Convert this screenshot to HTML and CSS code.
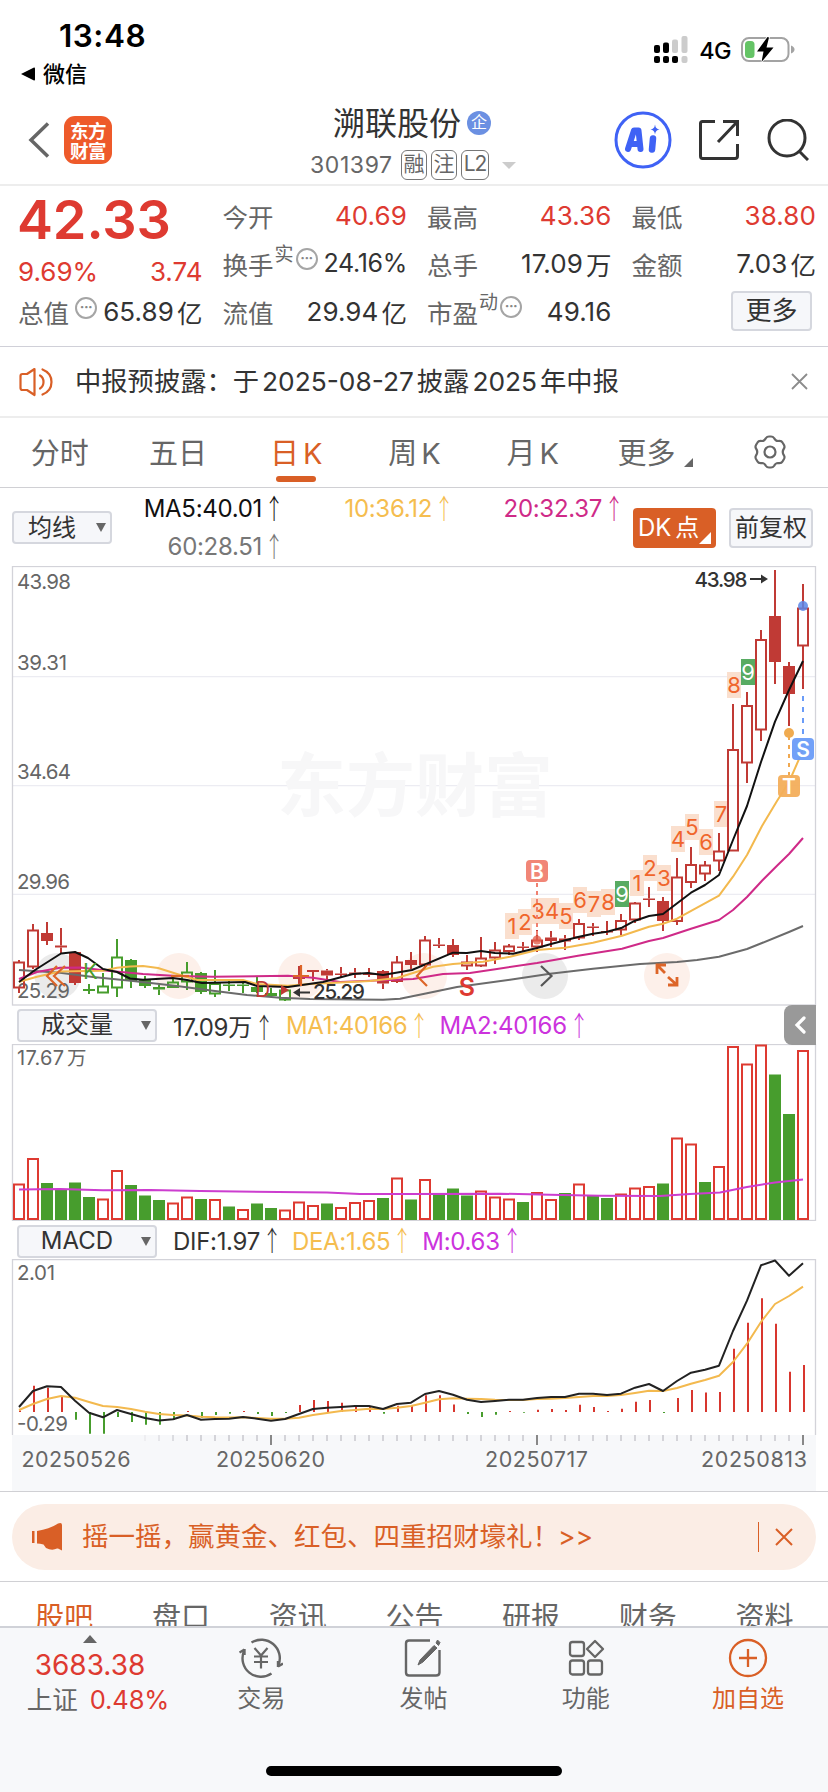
FILE: index.html
```html
<!DOCTYPE html>
<html lang="zh-CN">
<head>
<meta charset="utf-8">
<title>溯联股份 301397</title>
<link rel="stylesheet" href="styles.css">
</head>
<body>
<div class="app">
  <header class="status">
    <div class="status-left">
      <div class="clock">13:48</div>
      <div class="return"><svg width="14" height="14" viewBox="0 0 14 14"><path d="M0 7 L13 .5 Q14 .3 14 1.500 V12.500 Q14 13.700 13 13.500Z"/></svg><span>微信</span></div>
    </div>
    <div class="status-right">
      <svg width="34" height="28" viewBox="0 0 34 28">
        <g fill="#000"><rect x="0" y="9" width="6" height="8" rx="2"/><rect x="9" y="6.500" width="6" height="10.500" rx="2"/><rect x="0" y="20" width="6" height="7" rx="2"/><rect x="9" y="20" width="6" height="7" rx="2"/><rect x="18" y="20" width="6" height="7" rx="2"/></g>
        <g fill="#ccc"><rect x="18" y="3.500" width="6" height="13.500" rx="2"/><rect x="27.500" y="0" width="6" height="17" rx="2"/><rect x="27.500" y="20" width="6" height="7" rx="2"/></g>
      </svg>
      <span class="net">4G</span>
      <svg width="54" height="28" viewBox="0 0 54 28">
        <rect x="1" y="2" width="46.500" height="23" rx="7" fill="none" stroke="#a3a3a3" stroke-width="2"/>
        <path d="M50 9.500 Q53.500 11 53.500 13.500 Q53.500 16 50 17.500Z" fill="#a3a3a3"/>
        <rect x="4" y="5" width="9.500" height="17" rx="3.500" fill="#65c466"/>
        <path d="M26.500 1 L16 15.500 H22.500 L20.500 26 L32.500 11.500 H25.500 L28 1.500Z" fill="#000" stroke="#fff" stroke-width="1.500" paint-order="stroke"/>
      </svg>
    </div>
  </header>

  <nav class="titlebar">
    <div class="title-left">
      <svg width="22" height="36" viewBox="0 0 22 36"><path d="M20 1.500 L3 18 L20 34.500" fill="none" stroke="#666" stroke-width="3.500"/></svg>
      <div class="logo">东方<br>财富</div>
    </div>
    <div class="title-mid">
      <div class="name">溯联股份<span class="ent">企</span></div>
      <div class="code"><span class="digits">301397</span><span class="chip">融</span><span class="chip">注</span><span class="chip l2">L2</span><i class="caret"></i></div>
    </div>
    <div class="title-right">
      <svg width="58" height="58" viewBox="0 0 58 58">
        <circle cx="29" cy="29" r="27" fill="none" stroke="#3f62f5" stroke-width="3"/>
        <g fill="none" stroke="#3f62f5" stroke-linecap="round" stroke-linejoin="round"><path d="M14 38 L20 19.500 H24.500 L26.500 38 M17 33 H26" stroke-width="6"/><path d="M39 27.500 L38 38.500" stroke-width="6.500"/></g>
        <path d="M41 13.500 Q41.500 18 45.500 18.500 Q41.500 19 41 23.500 Q40.500 19 36.500 18.500 Q40.500 18 41 13.500Z" fill="#3f62f5"/>
      </svg>
      <svg width="42" height="42" viewBox="0 0 42 42"><path d="M17 2.500 H4.500 Q2.500 2.500 2.500 4.500 V37 Q2.500 39.500 4.500 39.500 H37 Q39.500 39.500 39.500 37 V25 M25 2.500 H39.500 V17 M39 3 L20 23" fill="none" stroke="#333" stroke-width="3"/></svg>
      <svg width="42" height="42" viewBox="0 0 42 42"><circle cx="20" cy="19" r="18" fill="none" stroke="#333" stroke-width="3"/><path d="M32 32 L41 41" stroke="#333" stroke-width="3"/></svg>
    </div>
  </nav>

  <section class="stats">
    <div class="col main">
      <div class="price">42.33</div>
      <div class="cell change red"><span>9.69%</span><span>3.74</span></div>
      <div class="cell total"><label>总值</label><i class="more-dot">···</i><b>65.89<em>亿</em></b></div>
    </div>
    <div class="col">
      <div class="cell"><label>今开</label><b class="red">40.69</b></div>
      <div class="cell"><label>换手</label><sup>实</sup><i class="more-dot">···</i><b class="tight">24.16%</b></div>
      <div class="cell"><label>流值</label><b>29.94<em>亿</em></b></div>
    </div>
    <div class="col">
      <div class="cell"><label>最高</label><b class="red">43.36</b></div>
      <div class="cell"><label>总手</label><b>17.09<em>万</em></b></div>
      <div class="cell"><label>市盈</label><sup>动</sup><i class="more-dot">···</i><b>49.16</b></div>
    </div>
    <div class="col">
      <div class="cell"><label>最低</label><b class="red">38.80</b></div>
      <div class="cell"><label>金额</label><b>7.03<em>亿</em></b></div>
      <div class="cell"><button class="btn more">更多</button></div>
    </div>
  </section>

  <section class="notice">
    <svg width="36" height="30" viewBox="0 0 36 30" fill="none" stroke="#d95f26" stroke-width="2.200" stroke-linejoin="round"><path d="M15.500 2 L8 7 H3.500 Q1.500 7 1.500 9 V21 Q1.500 23 3.500 23 H8 L15.500 28Z"/><path d="M21 8.500 Q24.500 10.500 24.500 15 Q24.500 19.500 21 21.500 M23.500 2.500 Q32.500 6 32.500 15 Q32.500 24 23.500 27.500" stroke-linecap="round"/></svg>
    <p>中报预披露：于<span>2025-08-27</span>披露<span>2025</span>年中报</p>
    <svg width="17" height="17" viewBox="0 0 17 17"><path d="M1 1 L16 16 M16 1 L1 16" stroke="#8c8c8c" stroke-width="1.800"/></svg>
  </section>

  <nav class="periods">
    <div>分时</div><div>五日</div><div class="on">日 K</div><div>周 K</div><div>月 K</div><div>更多<i class="corner"></i></div>
    <div class="gear"><svg width="34" height="34" viewBox="0 0 34 34" fill="none" stroke="#666" stroke-width="2.200" stroke-linejoin="round"><path d="M13 3 Q14 1.500 16 1.500 H18 Q20 1.500 21 3 Q22.500 6 25 6 Q28.500 5.500 29.500 7.500 L31 10 Q32 12 31 13.500 Q28.500 17 31 20.500 Q32 22 31 24 L29.500 26.500 Q28.500 28.500 25 28 Q22.500 28 21 31 Q20 32.500 18 32.500 H16 Q14 32.500 13 31 Q11.500 28 9 28 Q5.500 28.500 4.500 26.500 L3 24 Q2 22 3 20.500 Q5.500 17 3 13.500 Q2 12 3 10 L4.500 7.500 Q5.500 5.500 9 6 Q11.500 6 13 3Z"/><circle cx="17" cy="17" r="5.500"/></svg></div>
  </nav>

  <section class="averages">
    <button class="btn drop short"><span>均线</span><i></i></button>
    <div class="ma-list"><span>MA5:40.01<u>↑</u></span><span class="yellow">10:36.12<u>↑</u></span><span class="magenta">20:32.37<u>↑</u></span><span class="grey">60:28.51<u>↑</u></span></div>
    <button class="btn dk">DK 点<i></i></button>
    <button class="btn adj">前复权</button>
  </section>

  <svg class="chart" id="price" viewBox="0 566 828 440" width="828" height="440"></svg>

  <section class="legend vol">
    <button class="btn drop"><span>成交量</span><i></i></button>
    <span class="v1">17.09万<u>↑</u></span><span class="yellow v2">MA1:40166<u>↑</u></span><span class="purple">MA2:40166<u>↑</u></span>
    <div class="collapse"><svg width="12" height="18" viewBox="0 0 12 18"><path d="M10 2 L3 9 L10 16" fill="none" stroke="#fff" stroke-width="3.200" stroke-linecap="round"/></svg></div>
  </section>
  <svg class="chart" id="volume" viewBox="0 1044 828 177" width="828" height="177"></svg>

  <section class="legend macd">
    <button class="btn drop"><span>MACD</span><i></i></button>
    <span class="m1">DIF:1.97<u>↑</u></span><span class="yellow m2">DEA:1.65<u>↑</u></span><span class="purple">M:0.63<u>↑</u></span>
  </section>
  <svg class="chart" id="macd" viewBox="0 1259 828 232" width="828" height="232"></svg>

  <section class="promo">
    <div class="pill">
      <svg width="31" height="28" viewBox="0 0 31 28"><path d="M0 8 H2.500 V20 H0Z M5 8 Q18 6 26 .5 Q30 -1 30 2 V27.500 L26 25.500 L25 25.500 Q20 28 14 25 L11.500 21.500 Q8 20.500 5 20.500Z" fill="#d95f26"/></svg>
      <p>摇一摇，赢黄金、红包、四重招财壕礼！<span>&gt;&gt;</span></p>
      <i></i>
      <svg width="18" height="18" viewBox="0 0 18 18"><path d="M1 1 L17 17 M17 1 L1 17" stroke="#d95f26" stroke-width="2"/></svg>
    </div>
  </section>

  <nav class="sections"><div class="on">股吧</div><div>盘口</div><div>资讯</div><div>公告</div><div>研报</div><div>财务</div><div>资料</div></nav>

  <footer class="bottom">
    <div class="dock">
      <div class="index"><i class="up"></i><div class="pts">3683.38</div><div class="row"><span>上证</span><em>0.48%</em></div></div>
      <div class="item"><svg width="44" height="42" viewBox="0 0 44 42" fill="none" stroke="#666" stroke-width="2.400"><path d="M12.500 5.500 A18.500 18.500 0 0 1 39.500 28 M39 30 V24 M39 29.500 L44 26.500 M32.500 36.500 A18.500 18.500 0 0 1 5 14 M5.500 12 V18 M5.500 12.500 L.5 15.500"/><path d="M15.500 11 L22 18.500 L28.500 11 M22 18.500 V31.500 M15 19.500 H29 M15 25 H29" stroke-width="2.200"/></svg><span>交易</span></div>
      <div class="item"><svg width="42" height="42" viewBox="0 0 42 42" fill="none" stroke="#666" stroke-width="2.400"><path d="M28 3.500 H7 Q4 3.500 4 6.500 V35.500 Q4 38.500 7 38.500 H34 Q37.500 38.500 37.500 35.500 V13"/><path d="M35.500 3 L38 5.500 L36.500 8.500 L34 6Z M32 8.500 L35 11 L21 25 L16 28 L18 23Z" fill="#666" stroke-width="1"/></svg><span>发帖</span></div>
      <div class="item"><svg width="38" height="42" viewBox="0 0 38 42" fill="none" stroke="#666" stroke-width="2.300" stroke-linejoin="round"><rect x="3" y="5" width="14" height="14" rx="2.500"/><rect x="3" y="23.500" width="14" height="14" rx="2.500"/><rect x="21" y="23.500" width="14" height="14" rx="2.500"/><path d="M28 4 L36 12 L28 20 L20 12Z"/></svg><span>功能</span></div>
      <div class="item add"><svg width="42" height="42" viewBox="0 0 42 42" fill="none" stroke="#d95f26" stroke-width="2.300"><circle cx="21" cy="21" r="18"/><path d="M21 12 V30 M12 21 H30"/></svg><span>加自选</span></div>
    </div>
    <div class="home"></div>
  </footer>
</div>
<script src="charts.js"></script>
</body>
</html>
```

FILE: styles.css
```css
* { box-sizing: border-box; }
body { margin: 0; background: #fff; color: #333; font-family: Inter, "Noto Sans CJK SC", sans-serif; }
.app { width: 828px; height: 1792px; overflow: hidden; display: flex; flex-direction: column; }
.app > * { flex: none; }
i, em { font-style: normal; }
u { text-decoration: none; font: 300 24px/24px "Noto Sans CJK SC", sans-serif; display: inline-flex; justify-content: center; width: 12px; margin-left: 6px; letter-spacing: 0; transform: scale(.8, 1.15); }
svg { display: block; flex: none; }
.red { color: #de3a31; }
.yellow { color: #f5bd4f; }
.magenta { color: #cf2a88; }
.purple { color: #cc33dd; }
.grey { color: #777; }

.status { height: 104px; display: flex; justify-content: space-between; color: #000; padding: 0 33px 0 21px; }
.clock { margin: 17px 0 0 38px; font-size: 31.500px; line-height: 38px; font-weight: 600; letter-spacing: .5px; }
.return { display: flex; align-items: center; gap: 8px; margin-top: 4px; font-size: 22px; line-height: 30px; font-weight: 500; }
.status-right { display: flex; align-items: center; height: 28px; margin-top: 36px; }
.net { font-size: 23.500px; font-weight: 500; margin: 0 10px 0 11px; letter-spacing: -.6px; }

.titlebar { height: 82px; border-bottom: 2px solid #ededed; display: flex; padding: 0 19px 0 28px; }
.title-left { display: flex; align-items: center; gap: 14px; width: 236px; height: 71px; }
.logo { width: 48px; height: 48px; border-radius: 11px; background: #ee5a2a; color: #fff; font: 700 18.500px/20px "Noto Sans CJK SC", sans-serif; text-align: center; padding-top: 4px; letter-spacing: -.5px; }
.title-mid { width: 316px; }
.name { display: flex; align-items: center; height: 34px; font-size: 32px; padding-left: 69px; white-space: nowrap; }
.ent { width: 24px; height: 24px; border-radius: 50%; background: #6b90e2; color: #fff; font-size: 16px; line-height: 23px; text-align: center; margin: 3px 0 0 6px; }
.code { display: flex; align-items: center; height: 30px; margin-top: 12px; padding-left: 46px; color: #666; font-size: 23px; }
.digits { letter-spacing: .6px; width: 91px; }
.chip { width: 26px; height: 30px; border: 1.500px solid #777; border-radius: 6px; font-size: 21px; line-height: 26px; text-align: center; margin-right: 4px; display: flex; justify-content: center; }
.chip.l2 { width: 28px; letter-spacing: -1px; }
.caret { border: 7px solid transparent; border-top: 7px solid #ccc; border-bottom: 0; margin-left: 9px; }
.title-right { display: flex; align-items: center; justify-content: flex-end; flex: 1; gap: 27px; height: 72px; }
.title-right svg:first-child { margin-right: -1px; }

.stats { height: 161px; border-bottom: 1px solid #d0d0d8; display: grid; grid-template-columns: repeat(4, 184.500px); gap: 20px; padding: 5px 12px 0 18px; }
.cell { height: 48px; display: flex; align-items: center; font-size: 26px; white-space: nowrap; }
.cell label { color: #666; font-size: 25.500px; }
.cell b { font-weight: 400; margin-left: auto; letter-spacing: .1px; display: flex; align-items: center; }
.cell b.tight { font-size: 25px; letter-spacing: -.3px; }
.cell em { font-size: 25.500px; letter-spacing: 0; margin-left: 3px; }
.cell sup { color: #666; font-size: 19px; line-height: 20px; margin: -16px 0 0 1px; }
.more-dot { width: 22px; height: 22px; border: 2px solid #a5a5a5; border-radius: 50%; color: #888; font-size: 14px; line-height: 16px; text-align: center; margin: -8px 0 0 2px; letter-spacing: -.5px; font-weight: 700; flex: none; }
.total .more-dot { margin-left: 6px; }
.price { height: 57px; color: #de3a31; font-size: 54px; line-height: 58px; font-weight: 600; letter-spacing: -.1px; margin-left: -1px; }
.main .change { height: 47px; justify-content: space-between; }
.main .total { height: 33px; }
.btn { font-family: inherit; color: #333; background: #f6f7fa; border: 2px solid #d5d7de; border-radius: 4px; padding: 0; margin: 0; white-space: nowrap; flex: none; }
.more { width: 81px; height: 40px; font-size: 26px; line-height: 34px; margin: 0 4px 0 auto; }

.notice { height: 71px; border-bottom: 2px solid #ededed; display: flex; align-items: center; padding: 0 20px 0 19px; }
.notice p { margin: -5px auto 0 20px; font-size: 26.300px; white-space: nowrap; }
.notice p span { margin: 0 3px; font-size: 26.300px; }

.periods { height: 70px; border-bottom: 1px solid #d0d0d4; display: grid; grid-template-columns: repeat(7, 1fr); color: #666; font-size: 29px; }
.periods div { display: flex; align-items: center; justify-content: center; position: relative; white-space: nowrap; word-spacing: -4px; padding: 0 0 4px 1px; }
.periods .gear { padding: 0 0 2px 3px; }
.periods .on { color: #d95f26; }
.periods .on::after { content: ""; position: absolute; bottom: 5px; width: 40px; height: 6px; border-radius: 3px; background: #d95f26; }
.corner { border-left: 9px solid transparent; border-bottom: 9px solid #666; margin: 24px -8px 0 8px; }

.averages { height: 78px; display: flex; align-items: flex-start; padding-left: 12px; }
.drop { width: 140px; height: 33px; font-size: 24px; line-height: 28px; display: flex; align-items: center; padding-right: 4px; }
.drop span { flex: 1; padding-right: 6px; }
.drop i { border: 5px solid transparent; border-top: 9px solid #666; border-bottom: 0; }
.drop.short { width: 100px; margin-top: 23px; padding-right: 4px; }
.ma-list { display: grid; grid-template-columns: 168px 170px 170px; grid-auto-rows: 38px; width: 508px; line-height: 38px; font-size: 24px; letter-spacing: -.3px; color: #111; text-align: right; white-space: nowrap; margin-top: 2px; }
.ma-list .grey { color: #777; }
.ma-list .yellow { color: #f5bd4f; }
.ma-list .magenta { color: #cf2a88; }
.dk { width: 83px; height: 40px; margin: 20px 0 0 13px; background: #d95f26; border-color: #d95f26; color: #fff; font-size: 24px; text-align: left; padding-left: 3px; line-height: 34px; position: relative; word-spacing: -3px; }
.dk i { position: absolute; right: 3px; bottom: 2px; border-left: 12px solid transparent; border-bottom: 12px solid #fff; }
.adj { width: 84px; height: 40px; margin: 20px 0 0 13px; font-size: 24px; line-height: 34px; }

.legend { position: relative; display: flex; align-items: center; padding-left: 17px; font-size: 24px; white-space: nowrap; letter-spacing: -.3px; }
.legend .drop { margin-right: 16px; }
.vol { height: 38px; }
.macd { height: 38px; padding-top: 2px; }
.v1 { margin-right: 16px; }
.m1, .v2, .m2 { margin-right: 14px; }
.collapse { position: absolute; left: 784px; top: -1px; width: 32px; height: 40px; background: #999; border-radius: 8px 0 0 8px; display: flex; align-items: center; justify-content: center; }
.chart text { font-family: Inter, "Noto Sans CJK SC", sans-serif; }

.promo { height: 91px; border-top: 1px solid #d0d0d4; border-bottom: 1px solid #d0d0d4; padding: 12px 12px 0; }
.pill { height: 66px; border-radius: 33px; background: #fbede5; color: #d95f26; display: flex; align-items: center; padding: 0 23px 0 20px; }
.pill p { margin: -5px auto 0 19px; font-size: 26.500px; white-space: nowrap; }
.pill p span { margin-left: -1px; }
.pill i { width: 1.500px; height: 30px; background: #d95f26; margin-right: 16px; }

.sections { height: 44px; overflow: hidden; display: grid; grid-template-columns: repeat(7, 116.700px); padding-left: 6px; font-size: 29px; line-height: 71px; color: #666; text-align: center; }
.sections .on { color: #d95f26; }

.bottom { height: 166px; background: #f7f8fa; border-top: 2px solid #d0d2d8; }
.dock { display: grid; grid-template-columns: 180px repeat(4, 162.300px); height: 138px; }
.index { display: flex; flex-direction: column; align-items: center; color: #de3a31; padding-top: 7px; }
.up { border: 7px solid transparent; border-bottom: 8px solid #666; border-top: 0; }
.pts { font-size: 28px; line-height: 34px; margin-top: 5px; letter-spacing: 0; }
.row { display: flex; align-items: center; gap: 12px; font-size: 25.500px; line-height: 34px; margin: 1px 0 0 16px; letter-spacing: -.1px; }
.row span { color: #666; font-size: 25.500px; letter-spacing: 0; }
.item { display: flex; flex-direction: column; align-items: center; padding-top: 9px; color: #666; font-size: 24px; line-height: 36px; gap: 2px; }
.item.add { color: #d95f26; }
.home { width: 296px; height: 10px; border-radius: 5px; background: #000; margin: 0 auto; }
```

FILE: charts.js
```js
const STEP = 14, X0 = 19;
const RED = '#c03a35', GREEN = '#479d2d', VRED = '#de3a31';
const cx = i => X0 + STEP * i;
const line = (x1, y1, x2, y2, c, w, extra = '') =>
  `<line x1="${x1}" y1="${y1}" x2="${x2}" y2="${y2}" stroke="${c}" stroke-width="${w}" ${extra}/>`;
const poly = (pts, c, w = 2) =>
  `<polyline points="${pts.map(p => p.join(',')).join(' ')}" fill="none" stroke="${c}" stroke-width="${w}" stroke-linejoin="round"/>`;
const text = (x, y, s, c, size, extra = '') =>
  `<text x="${x}" y="${y}" fill="${c}" font-size="${size}" ${extra}>${s}</text>`;
const label = (x, y, s, w) => text(x, y, s, '#666', 20.5, `textLength="${w}"`);

// kind (lowercase hollow, uppercase solid), high, body top, body bottom, low
const candles = [
  ['r',960,962,988,993],['r',924,930,967,969],['R',922,933,941,945],['R',928,945.5,947.5,954],['R',951,952,983,985],
  ['G',984,989,991,994],['g',973,986,993,993],['g',939,957,988,997],['G',959,960,981,988],['G',976,979,986,988],
  ['G',985,987,989.5,995],['g',978,982,987.5,988],['g',962,972,982,990],['G',972,973,992,994],['g',970,983.5,994,997],
  ['G',979,984.5,986,991],['G',982,984.5,986,993],['G',976,987,992,993],['G',988,993,996,997],['g',989,990,1000,1001],
  ['R',966,976,979,985],['R',970,970,972,981],['R',969,970.5,975.5,979],['R',967,973.5,975,978],['R',968,972.5,974.5,978],
  ['R',968,973,975,977],['R',970,971,983.5,989],['r',956,962,981.5,983],['R',952,960,965,969],['r',936,940,965,970],
  ['R',938,944.5,946,948],['R',939,945,955,957],['r',955,962,966,970],['r',937,958,966,967],['r',942,950,958,964],
  ['r',944,946,951.5,955],['R',942,946.5,948,951],['r',930,940,947,952],['R',931,937.5,941,947],['R',935,938.5,941.5,950],
  ['r',919,923.5,938,940],['R',923,926.5,928,936],['R',921,931,932.5,935],['r',914,920.5,930,935],['r',902,903,920,923],
  ['R',887,898.5,900,907],['R',897,901,921,931],['r',858,877,921.5,925],['r',847,864.5,882.5,888],['r',861,865,874,881],
  ['r',833,851,861,871],['r',704,749.5,851,851],['r',692,705.5,763,783],['r',630,639.5,730,741],['R',570,616,662,684],
  ['R',662,666,694,726],['r',584,608,646,689]
];
const ma5 = [[19,982],[35,970],[61,953.5],[75,952],[88,958],[103,969],[117,972],[130,978.5],[143,979.7],[173,978],[187,980],[202,983],[245,982],[257,986],[288,987],[323,982],[353,974],[368,973],[383,975],[412,970],[453,952.7],[467,953],[481,951],[495,953],[513,953.7],[537,948],[551,944],[578,937],[593,933.7],[607,931.7],[622,927.7],[635,920.7],[649,916],[663,914],[691,892.7],[705,885],[719,875],[733,840],[747,806],[761,762],[775,721.7],[789,690],[803,661]];
const ma10 = [[19,981.7],[37,976.7],[60,971.5],[103,970.7],[117,967.7],[130,966.5],[143,966],[158,968],[177,974],[197,980],[243,980],[257,984],[288,985.7],[310,984],[370,981],[397,978],[413,973],[433,966.7],[453,964],[483,961.7],[510,956.7],[537,950],[565,947.7],[593,942.7],[622,935.7],[649,926.7],[663,923.7],[677,918.7],[719,895.7],[733,876.7],[747,855],[762,826],[777,801],[789,782],[803,750]];
const ma20 = [[19,979],[37,972],[60,967.7],[80,967.5],[110,971],[143,974],[177,976],[213,976.7],[288,975.7],[313,977.7],[340,982],[370,980.7],[413,979],[443,974],[470,973],[497,969],[537,963],[578,955.7],[622,948.7],[649,941],[663,938],[691,928.7],[719,920],[733,910],[747,897],[762,880.7],[777,865.7],[789,854],[803,838]];
const ma60 = [[19,970],[60,972.7],[93,977],[133,981],[177,986],[213,990.7],[247,995],[280,997.7],[310,999],[383,999.7],[400,998.7],[427,993.3],[457,987],[510,979.7],[550,973.7],[593,968.7],[640,964],[677,962],[697,960],[719,956.7],[747,949],[762,943],[789,932],[803,926]];
const counts = [[505,913,1],[518,909,2],[531,898,3],[545,898,4],[559,903,5],[573,887,6],[587,891,7],[601,889,8],[615,881,9],[630,870,1],[643,855,2],[657,865,3],[671,826,4],[685,814,5],[699,829,6],[714,801,7],[727,672,8],[741,659,9]];

function drawPrice() {
  let s = '';
  [676.7, 785.7, 894.3].forEach(y => s += line(13, y, 815, y, '#ececf2', 1.3));
  s += text(277, 811, '东方财富', '#f7f7f8', 69, 'font-weight="700" textLength="276"');
  s += '<rect x="12.500" y="566.500" width="803" height="438.500" fill="none" stroke="#d3d3d9" stroke-width="1.300"/>';
  [[57.5,0],[179,1],[301,1],[424,1],[545,0],[667,1]].forEach(([x, warm]) =>
    s += `<circle cx="${x}" cy="976" r="23" fill="${warm ? '#fdf0ea' : '#ebebeb'}"/>`);
  s += label(17, 589, '43.98', 54) + label(17, 670, '39.31', 50) + label(17, 779, '34.64', 54) + label(17, 889, '29.96', 53) + label(17, 998, '25.29', 53);
  counts.forEach(([x, y, n]) => {
    s += `<rect x="${x}" y="${y}" width="14" height="26" fill="${n === 9 ? '#58ab62' : '#fadfce'}"/>`;
    s += text(x + 7, y + 21, n, n === 9 ? '#fff' : '#f0652b', 22, 'text-anchor="middle"');
  });
  candles.forEach(([k, h, t, b, l], i) => {
    const x = cx(i), solid = k === k.toUpperCase(), c = k.toUpperCase() === 'R' ? RED : GREEN;
    if (h < t) s += line(x, h, x, t, c, 2);
    if (l > b) s += line(x, b, x, l, c, 2);
    s += solid ? `<rect x="${x - 6}" y="${t}" width="12" height="${b - t}" fill="${c}"/>`
      : `<rect x="${x - 5}" y="${t + .5}" width="10" height="${Math.max(b - t - 1, 2)}" fill="none" stroke="${c}" stroke-width="2"/>`;
  });
  s += poly(ma60, '#6b6b6b') + poly(ma20, '#cf2a88') + poly(ma10, '#f3b94e') + poly(ma5, '#111');
  s += text(83, 979, 'K', GREEN, 22) + text(255, 997, 'D', RED, 21) + `<path d="M281 985 L289 990 L281 995Z" fill="${RED}"/>`;
  // chart control glyphs
  s += '<g fill="none" stroke="#dd6528" stroke-width="2.200"><path d="M57 966 L47 976 L57 986 M65 966 L54 976 L65 986"/><path d="M171 976 H189"/><path d="M293 976 H309 M301 965 V986"/><path d="M427 965 L417 976 L427 986"/><path d="M657 974 V965 H666 M657 965 L665 973 M677 977 V985 H668 M677 985 L668 977" stroke-width="2.800"/></g>';
  s += '<path d="M541 966 L551.500 976 L541 986" fill="none" stroke="#555" stroke-width="2.200"/>';
  s += text(467, 996, 'S', VRED, 25, 'font-weight="600" text-anchor="middle"');
  // trade markers
  s += line(537, 883, 537, 936, '#f08070', 2, 'stroke-dasharray="4 4"') + '<circle cx="537" cy="940" r="4.500" fill="#e4604c" opacity=".8"/>';
  s += line(803, 696, 803, 738, '#6a9cf8', 2, 'stroke-dasharray="5 6"') + '<circle cx="803" cy="606" r="5" fill="#5a86e8" opacity=".85"/>';
  s += line(789, 736, 789, 775, '#f0a850', 2, 'stroke-dasharray="4 5"') + '<circle cx="789" cy="733" r="5" fill="#f0ab50"/>';
  [[526,860,'B','#f08070'],[792,738,'S','#6a9cf8'],[778,775,'T','#f3ae5b']].forEach(([x, y, t, c]) =>
    s += `<rect x="${x}" y="${y}" width="22" height="22" rx="4" fill="${c}" opacity=".95"/>` + text(x + 11, y + 18.5, t, '#fff', 21, 'font-weight="600" text-anchor="middle"'));
  s += text(694.5, 587, '43.98', '#333', 20.5, 'font-weight="500" textLength="53"') + text(313, 999, '25.29', '#333', 20.5, 'font-weight="500" textLength="52"');
  s += line(750, 579, 763, 579, '#333', 2) + '<path d="M761 574.500 L768 579 L761 583.500Z" fill="#333"/>';
  s += line(298, 992.5, 310, 992.5, '#333', 2) + '<path d="M300 988 L293 992.500 L300 997Z" fill="#333"/>';
  document.getElementById('price').innerHTML = s;
}

const volume = 'r1184 r1158.5 G1183 G1189 G1182.5 G1197 r1199 r1170.5 G1185 G1195.5 G1200 r1203 r1197 G1199 r1199.5 G1206.5 r1209.5 G1203.5 G1208 r1210 r1202 r1205.5 G1203.5 r1207.5 r1202.5 r1200.5 G1198 r1178 G1199.5 r1179.5 G1195 G1188.5 G1195.5 r1191 r1197 r1199 G1202 r1192.5 r1199.5 G1193 r1184 G1196 G1198 r1194 r1188 r1186.5 G1183.5 r1138 r1144 G1182 r1166.5 r1046.5 r1064 r1045 G1074.5 G1114 r1050.5'.split(' ');
const volMa = [[19,1189.5],[60,1189],[103,1190.2],[150,1190],[200,1191],[327,1192.5],[360,1194],[410,1194],[500,1193.7],[550,1194.7],[600,1195.7],[660,1196],[690,1194],[720,1192.5],[747,1187],[775,1182.5],[803,1179.5]];

function drawVolume() {
  let s = '<rect x="12.500" y="1044.500" width="803" height="176" fill="none" stroke="#d3d3d9" stroke-width="1.300"/>';
  volume.forEach((v, i) => {
    const y = +v.slice(1), x = cx(i);
    s += v[0] === 'G' ? `<rect x="${x - 6}" y="${y}" width="12" height="${1220 - y}" fill="${GREEN}"/>`
      : `<rect x="${x - 5}" y="${y + .5}" width="10" height="${1218.5 - y}" fill="none" stroke="${VRED}" stroke-width="2"/>`;
  });
  s += poly(volMa, '#cc3dcf') + text(17, 1065, '17.67', '#666', 20, 'textLength="47"') + text(67, 1065, '万', '#666', 19.5);
  document.getElementById('volume').innerHTML = s;
}

const hist = [1410.5,1385.7,1387.7,1397,1419.7,1433.7,1433.7,1417,1422,1424.7,1424.7,1420,1411,1418,1415,1413.7,1411,1414,1416,1413,1405,1400,1401,1402.7,1405,1406,1413.7,1405.7,1405,1395.3,1395.3,1404.5,1414,1417,1414.7,1411,1412.7,1409.7,1409,1410,1404.7,1407,1411,1408.7,1401.7,1400,1413,1398,1390,1392.5,1392,1348.7,1322.7,1298.3,1323.7,1371.7,1365];
const dif = [1407,1391,1386.3,1387,1400.7,1412.7,1417.3,1410,1414,1418,1420.5,1419.3,1415,1419.7,1419,1418.7,1417,1418.7,1420.7,1419,1414,1409,1407.7,1407,1406,1406,1409,1404,1402.7,1394,1391,1394.7,1399.7,1402,1401,1399.7,1399.7,1398,1397,1397,1393.7,1393.7,1395,1393.7,1387.7,1384,1391,1381,1372.7,1369.7,1365.7,1331,1300.7,1265.3,1260.5,1275.7,1263.3];
const dea = [1410,1404,1399,1396,1397.7,1402,1406,1407,1409,1411.7,1414,1415,1415.5,1416.7,1417.3,1417.5,1417.3,1418,1418.7,1418.7,1417.7,1415,1413,1411,1410,1408.7,1409,1407.7,1406,1402.7,1399.3,1398.3,1398.7,1399,1399.7,1400,1400,1399,1398.7,1398,1397,1396,1396,1395,1393,1390.7,1391,1388,1383.7,1380,1375.7,1362,1343.7,1322,1304,1296,1286.7];

function drawMacd() {
  let s = '<path d="M12.500 1435 V1259.500 H815.500 V1435" fill="none" stroke="#d3d3d9" stroke-width="1.300"/><rect x="12" y="1435" width="804" height="56" fill="#f7f8fa"/>';
  hist.forEach((y, i) => s += line(cx(i) + 1, 1412, cx(i) + 1, y, y < 1412 ? '#d8362e' : GREEN, 2));
  s += poly(dea.map((y, i) => [cx(i), y]), '#f3b94e') + poly(dif.map((y, i) => [cx(i), y]), '#222');
  for (let i = 9; i < 57; i++) {
    const major = i % 19 === 18;
    s += line(cx(i), 1435, cx(i), major ? 1445 : 1441, major ? '#888' : '#c5c5ca', major ? 2 : 1.4, `opacity="${Math.min(1, (i - 8) / 4)}"`);
  }
  s += label(17, 1280, '2.01', 38) + label(17, 1430.5, '-0.29', 51);
  [[21.5,'20250526'],[216,'20250620'],[485,'20250717'],[701,'20250813']].forEach(([x, t], i) => s += text(x, 1466.5, t, '#666', 21.5, `textLength="${i === 2 ? 103 : i === 3 ? 106 : 109}"`));
  document.getElementById('macd').innerHTML = s;
}

drawPrice();
drawVolume();
drawMacd();
```
